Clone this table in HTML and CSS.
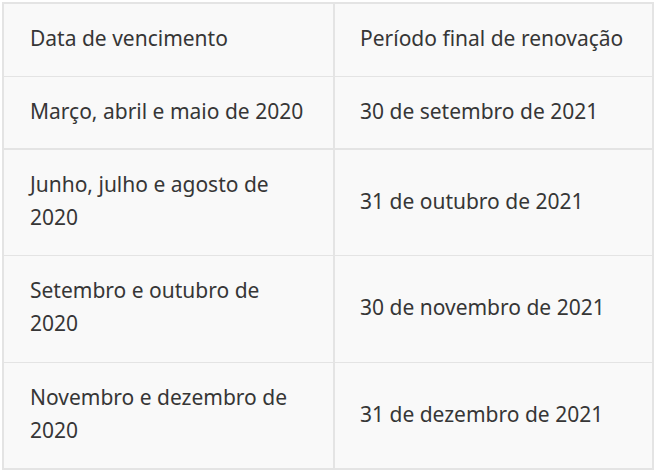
FILE: index.html
```html
<!DOCTYPE html>
<html lang="pt">
<head>
<meta charset="utf-8">
<link rel="stylesheet" href="styles.css">
</head>
<body>
<table class="grid">
  <colgroup><col class="c1"><col class="c2"></colgroup>
  <thead>
    <tr><th>Data de vencimento</th><th>Período final de renovação</th></tr>
  </thead>
  <tbody>
    <tr class="first"><td>Março, abril e maio de 2020</td><td>30 de setembro de 2021</td></tr>
    <tr><td>Junho, julho e agosto de 2020</td><td>31 de outubro de 2021</td></tr>
    <tr class="mid"><td>Setembro e outubro de 2020</td><td>30 de novembro de 2021</td></tr>
    <tr class="last"><td>Novembro e dezembro de 2020</td><td>31 de dezembro de 2021</td></tr>
  </tbody>
</table>
</body>
</html>
```
FILE: styles.css
```css
html, body { background: #ffffff; }
body { margin: 2px; }
.grid {
  width: 652px;
  table-layout: fixed;
  border-collapse: separate;
  border-spacing: 0;
  border-top: 2px solid #e4e4e4;
  border-left: 2px solid #e4e4e4;
  font-family: "Noto Sans", sans-serif;
  font-size: 21px;
  line-height: 33px;
  color: #363636;
}
.c1 { width: 331px; }
.c2 { width: 319px; }
.grid th, .grid td {
  background: #f9f9f9;
  border-right: 2px solid #e4e4e4;
  border-bottom: 1px solid #e4e4e4;
  padding: 18px 26px 21px 26px;
  text-align: left;
  font-weight: normal;
  vertical-align: middle;
}
.grid td + td, .grid th + th { padding-left: 25px; padding-right: 8px; }
.grid .first td { border-bottom-width: 2px; padding-bottom: 20px; }
.grid .mid td { padding-bottom: 22px; }
.grid .last td { border-bottom-width: 2px; }
```
